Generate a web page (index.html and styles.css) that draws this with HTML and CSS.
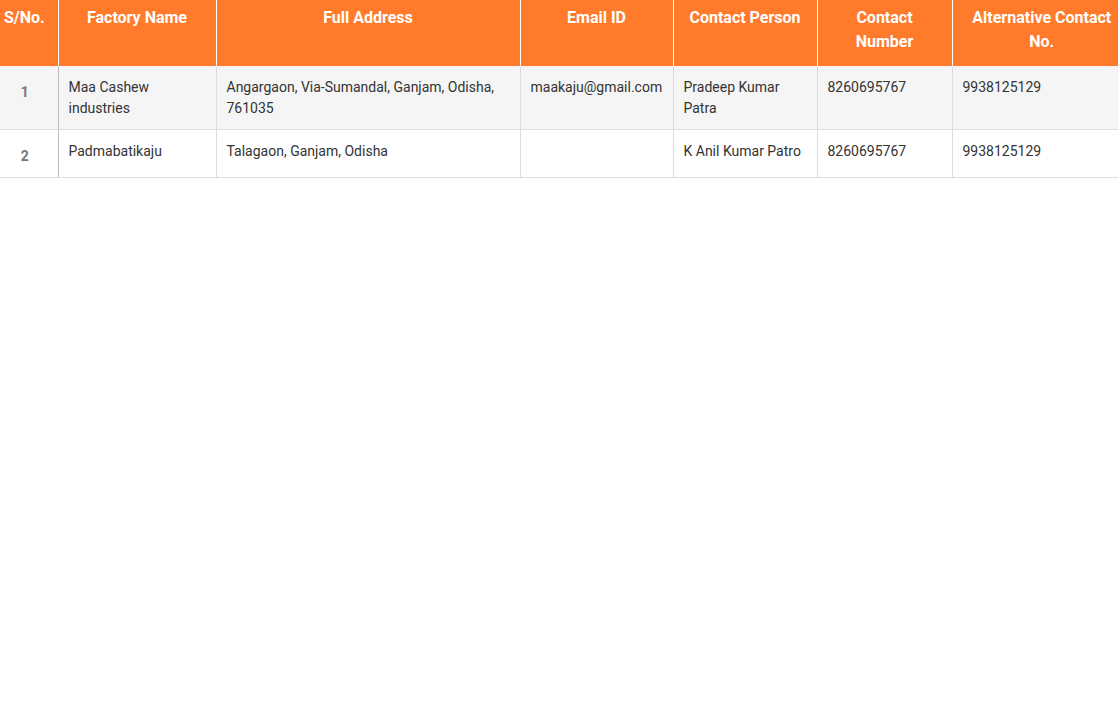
FILE: index.html
```html
<!DOCTYPE html>
<html>
<head>
<meta charset="utf-8">
<link rel="stylesheet" href="styles.css">
</head>
<body>
<div class="wrap">
<table class="factories">
  <colgroup>
    <col class="c-sno">
    <col class="c-name">
    <col class="c-addr">
    <col class="c-email">
    <col class="c-person">
    <col class="c-number">
    <col class="c-alt">
  </colgroup>
  <thead>
    <tr>
      <th class="h-sno">S/No.</th>
      <th>Factory Name</th>
      <th>Full Address</th>
      <th>Email ID</th>
      <th>Contact Person</th>
      <th>Contact Number</th>
      <th>Alternative Contact No.</th>
    </tr>
  </thead>
  <tbody>
    <tr class="odd">
      <td class="sno">1</td>
      <td>Maa Cashew industries</td>
      <td>Angargaon, Via-Sumandal, Ganjam, Odisha, 761035</td>
      <td>maakaju@gmail.com</td>
      <td>Pradeep Kumar Patra</td>
      <td>8260695767</td>
      <td>9938125129</td>
    </tr>
    <tr>
      <td class="sno">2</td>
      <td>Padmabatikaju</td>
      <td>Talagaon, Ganjam, Odisha</td>
      <td></td>
      <td>K Anil Kumar Patro</td>
      <td>8260695767</td>
      <td>9938125129</td>
    </tr>
  </tbody>
</table>
</div>
</body>
</html>
```

FILE: styles.css
```css
html, body {
  margin: 0;
  padding: 0;
  background: #ffffff;
  font-family: Roboto, "Liberation Sans", Arial, sans-serif;
}

.wrap {
  width: 1118px;
  overflow: hidden;
}

.factories {
  width: 1131px;
  border-collapse: collapse;
  table-layout: fixed;
}

.c-sno { width: 58px; }
.c-name { width: 158px; }
.c-addr { width: 304px; }
.c-email { width: 153px; }
.c-person { width: 144px; }
.c-number { width: 135px; }
.c-alt { width: 179px; }

.factories th {
  background: #ff7b2b;
  color: #ffffff;
  font-weight: 700;
  font-size: 16px;
  line-height: 24px;
  text-align: center;
  vertical-align: top;
  padding: 6px 10px 12px;
  height: 48px;
  border-left: 1px solid #ffffff;
}

.factories th:first-child {
  border-left: none;
}

.factories th.h-sno {
  text-align: left;
  padding-left: 4px;
  padding-right: 0;
}

.factories td {
  font-size: 14px;
  line-height: 21px;
  color: #333333;
  vertical-align: top;
  padding: 11px 10px 10px;
  border-left: 1px solid #dddddd;
  border-bottom: 1px solid #dddddd;
}

.factories td:first-child {
  border-left: none;
}

.factories td.sno {
  text-align: center;
  font-weight: 700;
  font-size: 14px;
  color: #777777;
  padding-top: 16px;
  padding-left: 2px;
  padding-right: 10px;
  border-right: 1px solid #bbbbbb;
}

.factories td.sno + td {
  border-left: 1px solid #bbbbbb;
}

.factories tr.odd td {
  background: #f5f5f5;
}
```
